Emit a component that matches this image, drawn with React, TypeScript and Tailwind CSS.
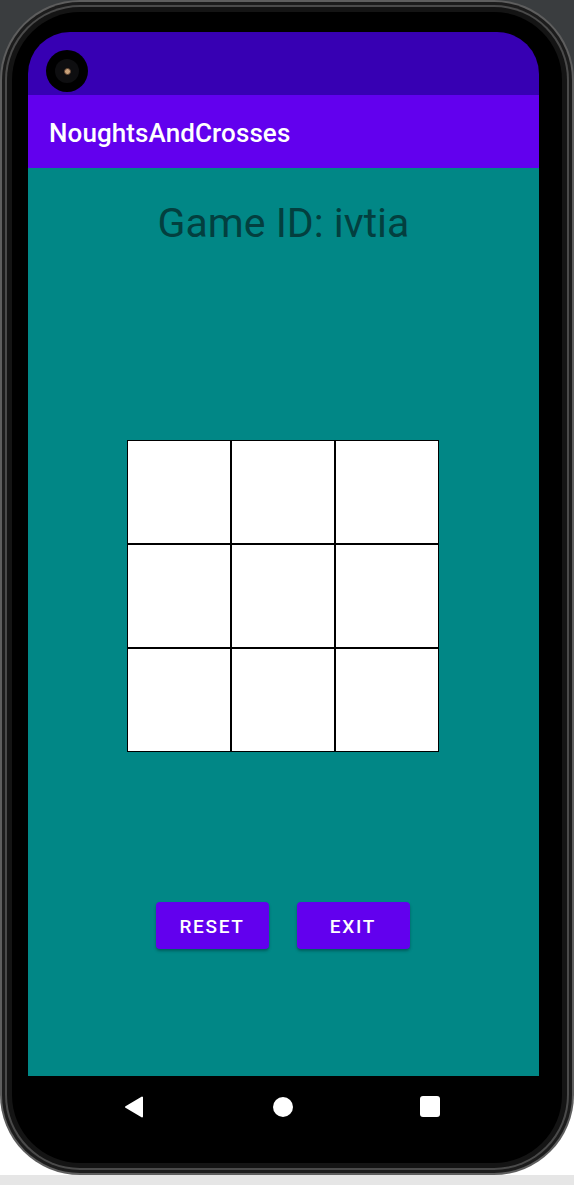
import React from "react";

function Cell() {
  return <div className="w-[104px] h-[104px] bg-white border border-black" />;
}

export default function App() {
  return (
    <div
      className="w-[574px] h-[1185px] overflow-hidden flex flex-col bg-[linear-gradient(to_bottom,#3a3d3f_50%,#ffffff_50%)]"
      style={{ fontFamily: "Roboto, 'Noto Sans', sans-serif" }}
    >
      {/* phone frame */}
      <div className="h-[1175px] w-[574px] shrink-0 rounded-[80px] bg-[#5e5e5e] p-[2px]">
        <div className="h-full w-full rounded-[78px] bg-[#1c1c1c] p-[3px]">
          <div className="h-full w-full rounded-[75px] bg-[#4a4a4a] p-[2px]">
            <div className="h-full w-full rounded-[73px] bg-[#141414] p-[5px]">
              <div className="h-full w-full rounded-[68px] bg-black pt-[20px] pl-[16px] pr-[23px] pb-[26px] flex flex-col">
                {/* screen */}
                <div className="w-[511px] h-[1105px] rounded-t-[42px] rounded-b-[30px] overflow-hidden flex flex-col">
                  {/* status bar */}
                  <div className="h-[63px] bg-[#3700B3] shrink-0 pl-[18px] pt-[18px]">
                    <div className="w-[42px] h-[42px] rounded-full bg-black flex items-center justify-center">
                      <div className="w-[24px] h-[24px] rounded-full bg-[#0e0e10] flex items-center justify-center">
                        <div className="w-[7px] h-[7px] rounded-full bg-[#c9a27a] border border-[#5a4030]" />
                      </div>
                    </div>
                  </div>
                  {/* app bar */}
                  <div className="h-[73px] bg-[#6200EE] shrink-0 flex items-center pl-[21px]">
                    <span className="text-white text-[26px] font-medium leading-none tracking-[0.1px] pt-[2px]">
                      NoughtsAndCrosses
                    </span>
                  </div>
                  {/* content */}
                  <div className="h-[908px] bg-[#018786] shrink-0 flex flex-col items-center">
                    <div className="mt-[31px] text-[41px] leading-[48px] text-[#033f3f]">
                      Game ID: ivtia
                    </div>
                    <div className="mt-[193px] grid grid-cols-3 w-[312px] ml-[-1px]">
                      {Array.from({ length: 9 }).map((_, i) => (
                        <Cell key={i} />
                      ))}
                    </div>
                    <div className="mt-[150px] flex gap-[28px] ml-[-2px]">
                      <button className="w-[113px] h-[47px] pt-[3px] rounded-[4px] bg-[#6200EE] text-white text-[19px] font-medium tracking-[0.09em] shadow-[0_2px_3px_rgba(0,0,0,0.3)]">
                        RESET
                      </button>
                      <button className="w-[113px] h-[47px] pt-[3px] rounded-[4px] bg-[#6200EE] text-white text-[19px] font-medium tracking-[0.09em] shadow-[0_2px_3px_rgba(0,0,0,0.3)]">
                        EXIT
                      </button>
                    </div>
                  </div>
                  {/* nav bar */}
                  <div className="h-[61px] bg-black shrink-0 flex items-center pl-[96px]">
                    <svg width="20" height="22" viewBox="0 0 20 22">
                      <path d="M18 1.5 L18 20.5 L2 11 Z" fill="white" stroke="white" strokeWidth="2" strokeLinejoin="round" />
                    </svg>
                    <div className="ml-[129px] w-[20px] h-[20px] rounded-full bg-white" />
                    <div className="ml-[127px] w-[20px] h-[21px] rounded-[3px] bg-white" />
                  </div>
                </div>
              </div>
            </div>
          </div>
        </div>
      </div>
      <div className="h-[10px] w-full bg-[#e6e6e6] shrink-0" />
    </div>
  );
}
